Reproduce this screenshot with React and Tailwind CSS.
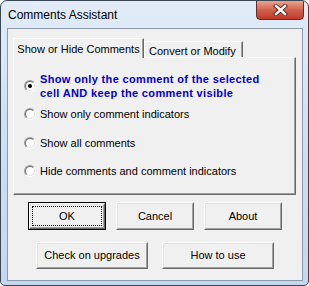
import React from "react";

const font = { fontFamily: '"Liberation Sans", Arial, sans-serif' };

const Radio = ({ checked }) => (
    <span className="w-[12px] h-[12px] shrink-0 rounded-full border border-t-[#a0a0a0] border-l-[#a0a0a0] border-r-white border-b-white flex">
        <span className="flex-1 rounded-full border border-t-[#696969] border-l-[#696969] border-r-[#e3e3e3] border-b-[#e3e3e3] bg-white flex items-center justify-center">
            {checked && <span className="w-[4px] h-[4px] rounded-full bg-black" />}
        </span>
    </span>
);

const Button = ({ children, width, height, isDefault }) => (
    <div
        className={`flex ${isDefault ? "border border-black" : ""}`}
        style={{ width, height }}
    >
        <div className="flex-1 flex border border-t-white border-l-white border-r-[#696969] border-b-[#696969]">
            <div className="flex-1 flex border border-t-[#e3e3e3] border-l-[#e3e3e3] border-r-[#a0a0a0] border-b-[#a0a0a0] bg-[#f0f0f0] p-[1px]">
                <div
                    className={`flex-1 flex items-center justify-center text-[11px] text-black ${isDefault ? "border border-dotted border-black" : ""}`}
                >
                    {children}
                </div>
            </div>
        </div>
    </div>
);

const Option = ({ checked, height, children, bold }) => (
    <div className="flex items-center gap-[4px]" style={{ height }}>
        <Radio checked={checked} />
        <span
            className={bold ? "font-bold text-[#0000c8] leading-[14px] tracking-[0.35px]" : "text-black leading-[14px]"}
        >
            {children}
        </span>
    </div>
);

const App = () => {
    return (
        <div className="w-[309px] h-[286px] bg-white" style={font}>
            <div className="w-full h-full flex flex-col border border-[#3b4754] rounded-t-[7px] rounded-b-[5px] overflow-hidden bg-gradient-to-b from-[#e2ecf8] via-[#cddff2] to-[#c3d7ee]">
                {/* title bar */}
                <div className="h-[27px] flex items-start shrink-0">
                    <span className="pl-[7px] pt-[7px] text-[12px] leading-[14px] text-black">
                        Comments Assistant
                    </span>
                    <div className="ml-auto mr-[4px] -mt-px w-[48px] h-[20px] rounded-b-[4px] border border-[#6b2a20] bg-gradient-to-b from-[#e9a591] via-[#d0604a] to-[#c1382a] flex items-center justify-center">
                        <svg width="15" height="12" viewBox="0 0 15 12">
                            <path d="M3 2 L12 10 M12 2 L3 10" stroke="#5a1e16" strokeWidth="4.2" strokeLinecap="square" />
                            <path d="M3 2 L12 10 M12 2 L3 10" stroke="#ffffff" strokeWidth="2.4" strokeLinecap="square" />
                        </svg>
                    </div>
                </div>

                {/* client area */}
                <div className="flex-1 ml-[6px] mr-[5px] mb-[4px] border border-[#8e9aa8] bg-[#f0f0f0] flex flex-col text-[11px]">
                    {/* tabs */}
                    <div className="ml-[5px] mt-[9px] h-[19px] flex items-end">
                        <div className="relative z-10 -mb-px w-[131px] h-[20px] bg-[#f0f0f0] border-l border-t border-white border-r border-r-[#696969] shadow-[inset_-1px_0_0_#a0a0a0] flex items-start justify-center pt-[2px] text-black">
                            Show or Hide Comments
                        </div>
                        <div className="w-[99px] h-[16px] border-l border-t border-white border-r border-r-[#696969] shadow-[inset_-1px_0_0_#a0a0a0] flex items-start pl-[4px] pt-[1px] text-black">
                            Convert or Modify
                        </div>
                    </div>

                    {/* panel */}
                    <div className="ml-[5px] w-[283px] h-[138px] border-l border-t border-white border-r border-b border-r-[#696969] border-b-[#696969] shadow-[inset_-1px_-1px_0_#a0a0a0] pl-[10px] pt-[13px] flex flex-col">
                        <Option checked height={29} bold>
                            Show only the comment of the selected
                            <br />
                            cell AND keep the comment visible
                        </Option>
                        <Option height={28}>Show only comment indicators</Option>
                        <Option height={29}>Show all comments</Option>
                        <Option height={28}>Hide comments and comment indicators</Option>
                    </div>

                    {/* buttons */}
                    <div className="ml-[20px] mt-[7px] flex gap-[10px]">
                        <Button width={78} height={28} isDefault>OK</Button>
                        <Button width={78} height={28}>Cancel</Button>
                        <Button width={78} height={28}>About</Button>
                    </div>
                    <div className="ml-[28px] mt-[12px] flex gap-[14px]">
                        <Button width={112} height={27}>Check on upgrades</Button>
                        <Button width={112} height={27}>How to use</Button>
                    </div>
                </div>
            </div>
        </div>
    );
};

export default App;
